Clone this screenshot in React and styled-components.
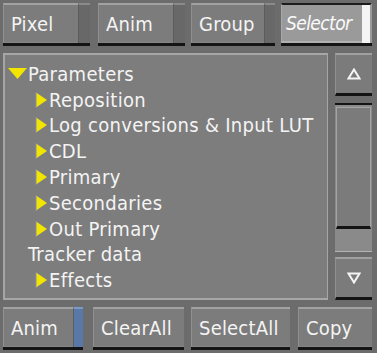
import React from "react";
import styled, { createGlobalStyle, css } from "styled-components";

const Global = createGlobalStyle`
  html, body { margin: 0; padding: 0; background: #6c6c6c; }
  #root { width: 377px; height: 353px; }
`;

const FONT = `"DejaVu Sans Condensed", "DejaVu Sans", sans-serif`;

const Root = styled.div`
  width: 377px;
  height: 353px;
  box-sizing: border-box;
  background: #6c6c6c;
  padding: 3px 5px 3px 3px;
  display: flex;
  flex-direction: column;
  font-family: ${FONT};
  font-stretch: condensed;
  color: #f4f4f4;
`;

const Bar = styled.div`
  display: flex;
  height: 43px;
  flex: none;
`;

const BtnOuter = styled.div`
  width: ${(p) => p.$w}px;
  margin-left: ${(p) => p.$ml || 0}px;
  height: 43px;
  box-sizing: border-box;
  display: flex;
  border-bottom: 3px solid #141414;
  flex: none;
`;

const Face = styled.div`
  flex: 1;
  box-sizing: border-box;
  background: #7c7c7c;
  border-top: 2px solid #a2a2a2;
  border-left: 1px solid #909090;
  border-bottom: 1px solid #858585;
  display: flex;
  align-items: center;
  padding-left: 7px;
  font-size: 20px;
  letter-spacing: 0.2px;
  white-space: nowrap;
  overflow: hidden;
  ${(p) =>
    p.$active &&
    css`
      background: #9a9a9a;
      border-top: 2px solid #1c1c1c;
      border-left: 1px solid #a8a8a8;
      border-bottom: 2px solid #b0b0b0;
      font-style: italic;
      font-size: 19px;
      letter-spacing: -0.6px;
      padding-left: 4px;
      color: #fafafa;
    `}
`;

const stripColors = {
  dark: { bg: "#686868", top: "#8a8a8a" },
  blue: { bg: "#5878a8", top: "#7a9ac8" },
  white: { bg: "#f4f4f4", top: "#1c1c1c" },
};

const Strip = styled.div`
  width: ${(p) => p.$w}px;
  flex: none;
  box-sizing: border-box;
  background: ${(p) => stripColors[p.$kind].bg};
  border-top: 2px solid ${(p) => stripColors[p.$kind].top};
  border-left: 1px solid #5c5c5c;
  ${(p) =>
    p.$kind === "white" &&
    css`
      border-left: none;
      border-right: 2px solid #9a9a9a;
    `}
`;

function Button({ w, ml, strip, stripW = 11, active, children }) {
  return (
    <BtnOuter $w={w} $ml={ml}>
      <Face $active={active}>{children}</Face>
      {strip && <Strip $kind={strip} $w={stripW} />}
    </BtnOuter>
  );
}

const Middle = styled.div`
  flex: 1;
  display: flex;
  margin-top: 7px;
  margin-bottom: 7px;
`;

const TreePanel = styled.div`
  width: 326px;
  box-sizing: border-box;
  border: 2px solid #a6a6a6;
  border-right-width: 1px;
  background: #7d7d7d;
  padding: 6px 0 0 3px;
  display: flex;
  flex-direction: column;
`;

const Row = styled.div`
  height: 25.8px;
  display: flex;
  align-items: center;
  padding-left: ${(p) => (p.$level ? 27 : 0)}px;
  font-size: 20px;
  letter-spacing: 0.3px;
  white-space: nowrap;
  gap: ${(p) => (p.$level ? 1 : 0)}px;
`;

const Spacer = styled.span`
  width: 20px;
  flex: none;
`;

const Tri = styled.svg`
  flex: none;
  display: block;
`;

const DownTri = () => (
  <Tri width="20" height="14" viewBox="0 0 20 14">
    <polygon points="0,1 19,1 9.5,12" fill="#f2e600" />
  </Tri>
);

const RightTri = () => (
  <Tri width="13" height="16" viewBox="0 0 13 16">
    <polygon points="1,0.5 12,8 1,15.5" fill="#f2e600" />
    <line x1="1" y1="0.5" x2="1" y2="15.5" stroke="#8a8ab8" strokeWidth="1" />
  </Tri>
);

const Scroll = styled.div`
  margin-left: 7px;
  width: 37px;
  display: flex;
  flex-direction: column;
`;

const ArrowBtn = styled.div`
  height: 43px;
  box-sizing: border-box;
  flex: none;
  background: #7b7b7b;
  border-top: 2px solid #a0a0a0;
  border-left: 1px solid #909090;
  border-bottom: 3px solid #141414;
  display: flex;
  align-items: center;
  justify-content: center;
`;

const Track = styled.div`
  flex: 1;
  margin: 7px 0 5px;
  border-top: 2px solid #141414;
  border-bottom: 1px solid #b4b4b4;
  background: #8a8a8a;
  display: flex;
  flex-direction: column;
  padding-top: 2px;
`;

const Thumb = styled.div`
  height: 122px;
  box-sizing: border-box;
  margin: 0 1px;
  background: #7b7b7b;
  border: 1px solid #a4a4a4;
  border-bottom: 3px solid #141414;
`;

const ArrowIcon = ({ up }) => (
  <svg width="14" height="12" viewBox="0 0 14 12">
    <polygon
      points={up ? "7,1.5 12.5,10.5 1.5,10.5" : "1.5,1.5 12.5,1.5 7,10.5"}
      fill="none"
      stroke="#f4f4f4"
      strokeWidth="2"
      strokeLinejoin="miter"
    />
  </svg>
);

const tree = [
  { label: "Parameters", level: 0, icon: "down" },
  { label: "Reposition", level: 1, icon: "right" },
  { label: "Log conversions & Input LUT", level: 1, icon: "right" },
  { label: "CDL", level: 1, icon: "right" },
  { label: "Primary", level: 1, icon: "right" },
  { label: "Secondaries", level: 1, icon: "right" },
  { label: "Out Primary", level: 1, icon: "right" },
  { label: "Tracker data", level: 0, icon: null },
  { label: "Effects", level: 1, icon: "right" },
];

export default function App() {
  return (
    <>
      <Global />
      <Root>
        <Bar>
          <Button w={87} strip="dark" stripW={12}>Pixel</Button>
          <Button w={87} ml={8} strip="dark" stripW={12}>Anim</Button>
          <Button w={84} ml={6} strip="dark" stripW={11}>Group</Button>
          <Button w={91} ml={6} strip="white" stripW={10} active>Selector</Button>
        </Bar>
        <Middle>
          <TreePanel>
            {tree.map((t) => (
              <Row key={t.label} $level={t.level}>
                {t.icon === "down" && <DownTri />}
                {t.icon === "right" && <RightTri />}
                {t.icon === null && <Spacer />}
                <span>{t.label}</span>
              </Row>
            ))}
          </TreePanel>
          <Scroll>
            <ArrowBtn><ArrowIcon up /></ArrowBtn>
            <Track>
              <Thumb />
            </Track>
            <ArrowBtn><ArrowIcon /></ArrowBtn>
          </Scroll>
        </Middle>
        <Bar>
          <Button w={80} strip="blue" stripW={10}>Anim</Button>
          <Button w={91} ml={10}>ClearAll</Button>
          <Button w={99} ml={7}>SelectAll</Button>
          <Button w={74} ml={8}>Copy</Button>
        </Bar>
      </Root>
    </>
  );
}
